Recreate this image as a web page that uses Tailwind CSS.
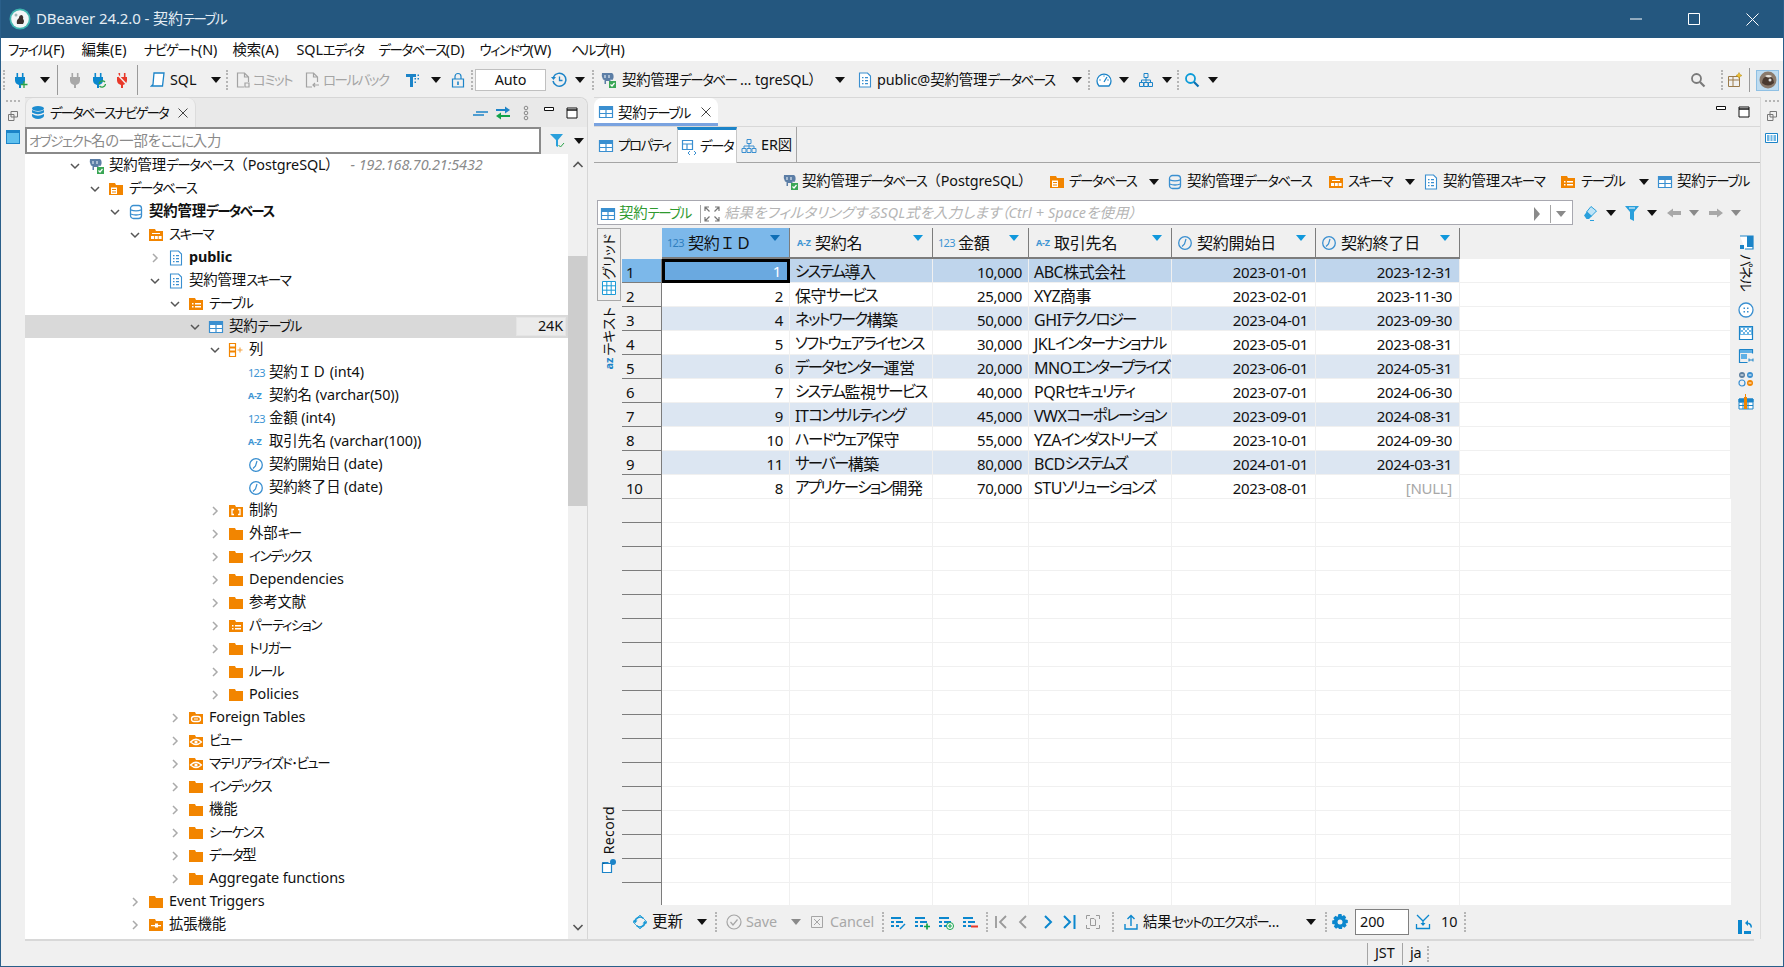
<!DOCTYPE html>
<html lang="ja">
<head>
<meta charset="utf-8">
<title>DBeaver 24.2.0 - 契約テーブル</title>
<script src="https://cdn.jsdelivr.net/npm/@tailwindcss/browser@4"></script>
</head>
<body class="m-0">
<svg class="hidden">
<symbol id="ar" viewBox="0 0 10 6"><path d="M0 0h10L5 6z" fill="currentColor"/></symbol>
<symbol id="cd" viewBox="0 0 12 12"><path d="M2 4l4 4 4-4" fill="none" stroke="#555" stroke-width="1.5"/></symbol>
<symbol id="cr" viewBox="0 0 12 12"><path d="M4 2l4 4-4 4" fill="none" stroke="#aaa" stroke-width="1.5"/></symbol>
<symbol id="fo" viewBox="0 0 16 16"><path d="M1 2h6l1 2h7v10H1z" fill="#f28500"/></symbol>
<symbol id="fl" viewBox="0 0 16 16"><path d="M1 2h6l1 2h7v10H1z" fill="#f28500"/><path d="M4 7h1.5v1.5H4zM7 7h6v1.5H7zM4 10h1.5v1.5H4zM7 10h6v1.5H7z" fill="#fff"/></symbol>
<symbol id="fs" viewBox="0 0 16 16"><path d="M1 2h6l1 2h7v10H1z" fill="#f28500"/><path d="M3 9h3v3H3zM6.800 9h3v3h-3zM10.600 9h3v3h-3z M4 6h8v1H4z" fill="#fff"/></symbol>
<symbol id="fd" viewBox="0 0 16 16"><path d="M1 2h6l1 2h7v10H1z" fill="#f28500"/><path d="M3 6.500h6v6.500H3z" fill="#fff"/><path d="M4 8h4v1H4zM4 10.500h4v1H4z" fill="#f28500"/></symbol>
<symbol id="fc" viewBox="0 0 16 16"><path d="M1 2h6l1 2h7v10H1z" fill="#f28500"/><path d="M6 6.500H4v5h2M10 6.500h2v5h-2" fill="none" stroke="#fff" stroke-width="1.300"/></symbol>
<symbol id="fv" viewBox="0 0 16 16"><path d="M1 2h6l1 2h7v10H1z" fill="#f28500"/><path d="M2.500 9q5.500-5.500 11 0q-5.500 5-11 0z" fill="none" stroke="#fff" stroke-width="1.200"/><circle cx="8" cy="9" r="1.600" fill="#fff"/></symbol>
<symbol id="ff" viewBox="0 0 16 16"><path d="M1 2h6l1 2h7v10H1z" fill="#f28500"/><rect x="3.500" y="6.500" width="9" height="5" rx="2.500" fill="none" stroke="#fff" stroke-width="1.300"/><path d="M6 9h4" stroke="#fff"/></symbol>
<symbol id="fe" viewBox="0 0 16 16"><path d="M1 2h6l1 2h7v10H1z" fill="#f28500"/><path d="M3 8h4V6.500h3V8h3v1.300h-3v1.300H7V9.300H3z" fill="#fff"/></symbol>
<symbol id="db" viewBox="0 0 16 16"><g fill="none" stroke="#3a8fd0" stroke-width="1.300"><rect x="2.500" y="1.500" width="11" height="13" rx="3"/><path d="M2.500 5.800q5.500 2 11 0M2.500 10q5.500 2 11 0"/></g></symbol>
<symbol id="dbf" viewBox="0 0 16 16"><g fill="#1c8cd0"><ellipse cx="8" cy="3.500" rx="6" ry="2.500"/><path d="M2 5q6 3.500 12 0v2.500q-6 3.500-12 0zM2 9q6 3.500 12 0v2q-1 2.500-6 3-5-.5-6-3z"/></g></symbol>
<symbol id="doc" viewBox="0 0 16 16"><path d="M2.500 1h8l3 3v11h-11z" fill="#fff" stroke="#3a8fd0" stroke-width="1.100"/><path d="M5 5h1.500v1.300H5zM8 5h3v1.300H8zM5 8h1.500v1.300H5zM8 8h3v1.300H8zM5 11h1.500v1.300H5zM8 11h3v1.300H8z" fill="#3a8fd0"/></symbol>
<symbol id="tb" viewBox="0 0 16 16"><path d="M1.500 2.500h13v11h-13z" fill="#fff" stroke="#3a8fd0" stroke-width="1.200"/><path d="M1.500 3h13v3h-13z" fill="#3a8fd0"/><path d="M1.500 9.500h13M8 6v7.500" stroke="#3a8fd0" stroke-width="1.200"/></symbol>
<symbol id="col" viewBox="0 0 16 16"><path d="M1.500 1.500h6v13h-6z" fill="#fff" stroke="#f28500" stroke-width="1.200"/><path d="M1.500 5.500h6M1.500 9.500h6" stroke="#f28500" stroke-width="1.800"/><path d="M9.500 8h5M12 5.500v5" stroke="#f28500" stroke-width="1.100" opacity=".75"/></symbol>
<symbol id="clk" viewBox="0 0 16 16"><circle cx="8" cy="8" r="6.300" fill="none" stroke="#3a8fd0" stroke-width="1.300"/><path d="M9 4L7.500 9 5 11.500" fill="none" stroke="#3a8fd0" stroke-width="1.200"/></symbol>
<symbol id="pg" viewBox="0 0 16 16"><path d="M2 1h10q2 1 1.500 5l-1 2-2-.5V12H9V9H6v3H4.500V8L3 7.500Q1 4 2 1z" fill="#5c7ea6"/><path d="M5 3v3M9 3v3" stroke="#dbe6f0" stroke-width="1.200"/><path d="M9 9h7v7H9z" fill="#3aa655"/><path d="M10.500 12.500l1.500 1.500 2.500-3" fill="none" stroke="#fff" stroke-width="1.200"/></symbol>
<symbol id="plug" viewBox="0 0 16 16"><path d="M4.500 1h1.600v4h3.800V1h1.600v4H13v3.500a5 5 0 0 1-4 4.400V16H7v-3.100a5 5 0 0 1-4-4.400V5h1.500z" fill="currentColor"/></symbol>
<symbol id="rowp" viewBox="0 0 16 16"><path d="M1 3h10v2H1zM1 7h3v2H1zM6 7h7v2H6zM1 11h3v2H1zM6 11h3v2H6z" fill="#0b87ce"/></symbol>
</svg>

<div class="flex flex-col w-[1784px] h-[967px] overflow-hidden bg-[#f0f0f0] border-x border-b border-[#2a5f8a] text-[14.4px] leading-none text-[#111] [font-family:'Noto_Sans','Noto_Sans_CJK_JP',sans-serif] [font-feature-settings:'palt'] tracking-[-0.1px] [&_em]:not-italic [&_em]:text-[13.5px] [&_em]:tracking-[-1.5px]">

  <!-- title bar -->
  <div class="flex items-center h-[38px] shrink-0 bg-[#24577f] text-[#e4edf4] text-[15px]">
    <svg class="w-[22px] h-[22px] ml-[8px]" viewBox="0 0 22 22"><circle cx="11" cy="11" r="10.500" fill="#3fb6b0"/><circle cx="11" cy="11" r="8.800" fill="#f2f6f6"/><path d="M8 16q-1-4 2-6 0-3 3-3 2 2 1 4 2 2 0 5z" fill="#3a2f2b"/><circle cx="7" cy="7" r="1.500" fill="#9fb8b8"/></svg>
    <span class="ml-[5px]">DBeaver 24.2.0 - 契約<em>テーブル</em></span>
    <svg class="w-[12px] h-[12px] ml-auto" viewBox="0 0 12 12"><path d="M0 6h12" stroke="#fff"/></svg>
    <svg class="w-[12px] h-[12px] ml-[46px]" viewBox="0 0 12 12"><path d="M.5.500h11v11H.500z" fill="none" stroke="#fff"/></svg>
    <svg class="w-[13px] h-[13px] ml-[46px] mr-[24px]" viewBox="0 0 13 13"><path d="M.500.500l12 12M12.500.500l-12 12" stroke="#fff"/></svg>
  </div>

  <!-- menu -->
  <div class="flex items-center h-[23px] shrink-0 bg-white pl-[7px] pt-[2px] whitespace-nowrap">
    <span class="w-[73.5px]"><em>ファイル</em>(F)</span><span class="w-[62px]">編集(E)</span><span class="w-[89px]"><em>ナビゲート</em>(N)</span><span class="w-[64px]">検索(A)</span><span class="w-[82px]">SQL<em>エディタ</em></span><span class="w-[101px]"><em>データベース</em>(D)</span><span class="w-[92px]"><em>ウィンドウ</em>(W)</span><span><em>ヘルプ</em>(H)</span>
  </div>

  <!-- main toolbar -->
  <div class="flex items-center h-[36px] shrink-0 pt-[2px] whitespace-nowrap">
    <span class="w-[2px] h-[20px] ml-[2px] border-l-2 border-dotted border-[#b5b5b5]"></span>
    <svg class="w-4 h-4 ml-[7px] text-[#0b87ce]"><use href="#plug"/><path d="M8.500 12.500h7M12 9v7" stroke="#2aa34a" stroke-width="1.300"/></svg>
    <svg class="w-[10px] h-[6px] ml-[12px]"><use href="#ar"/></svg>
    <span class="w-px h-[30px] ml-[7px] bg-[#9a9a9a]"></span>
    <svg class="w-4 h-4 ml-[9px] text-[#a8a8a8]"><use href="#plug"/></svg>
    <svg class="w-4 h-4 ml-[7px] text-[#0b87ce]"><use href="#plug"/><path d="M9 12a3.500 3.500 0 0 1 6-2M15.500 12a3.500 3.500 0 0 1-6 2" fill="none" stroke="#2aa34a" stroke-width="1.300"/></svg>
    <svg class="w-4 h-4 ml-[8px] text-[#e8392a]"><use href="#plug"/><path d="M2 1l13 14" stroke="#f0f0f0" stroke-width="1.500"/></svg>
    <span class="w-px h-[30px] ml-[7px] bg-[#9a9a9a]"></span>
    <svg class="w-4 h-4 ml-[12px]" viewBox="0 0 16 16"><path d="M4 1h10l-1.500 13H1.500L3 12.500z" fill="#fff" stroke="#1c84c8" stroke-width="1.300"/></svg>
    <span class="w-[36px] ml-[4px]">SQL</span>
    <svg class="w-[10px] h-[6px] ml-[5px]"><use href="#ar"/></svg>
    <span class="w-[2px] h-[20px] ml-[5px] border-l-2 border-dotted border-[#b5b5b5]"></span>
    <svg class="w-4 h-4 ml-[7px]" viewBox="0 0 16 16"><path d="M9 15H2.500V1h7l4 4v5M9.500 1v4h4" fill="none" stroke="#a3a3a3" stroke-width="1.200"/><path d="M10 11h4v4h-4z" fill="none" stroke="#a3a3a3" stroke-width="1.200"/></svg>
    <span class="w-[50px] ml-[2px] text-[#a5a5a5]"><em>コミット</em></span>
    <svg class="w-4 h-4 ml-px" viewBox="0 0 16 16"><path d="M8 15H2.500V1h7l4 4v5M9.500 1v4h4" fill="none" stroke="#a3a3a3" stroke-width="1.200"/><path d="M9 13h6M11 11l-2 2 2 2" fill="none" stroke="#a3a3a3" stroke-width="1.200"/></svg>
    <span class="w-[82px] ml-[3px] text-[#a5a5a5]"><em>ロールバック</em></span>
    <svg class="w-4 h-4" viewBox="0 0 16 16"><path d="M1 2h10v3H8v10H5V5H1z" fill="#1c84c8"/><path d="M12.500 2.500h1.500v1.500h-1.500zM12.500 6h1.500v1.500h-1.500zM9.500 6H11v1.500H9.500zM9.500 9.500H11V11H9.500z" fill="#1c84c8"/></svg>
    <svg class="w-[10px] h-[6px] ml-[10px]"><use href="#ar"/></svg>
    <svg class="w-4 h-4 ml-[9px]" viewBox="0 0 16 16"><path d="M2.500 7h11v8h-11z" fill="none" stroke="#1c84c8" stroke-width="1.200"/><path d="M5 7V4.500a3 3 0 0 1 6 0V7" fill="none" stroke="#1c84c8" stroke-width="1.200"/><path d="M7.200 9.500h1.600V13H7.200z" fill="#1c84c8"/></svg>
    <span class="w-[2px] h-[20px] ml-[5px] border-l-2 border-dotted border-[#b5b5b5]"></span>
    <span class="flex items-center justify-center w-[71px] h-[22px] ml-[2px] bg-white border border-[#c0c0c0]">Auto</span>
    <svg class="w-4 h-4 ml-[5px]" viewBox="0 0 16 16"><path d="M2.500 5a6.500 6.500 0 1 1-.5 4" fill="none" stroke="#1c84c8" stroke-width="1.500"/><path d="M0 5h5L2.500 8z" fill="#1c84c8"/><path d="M8.500 4.500V8.500h3" fill="none" stroke="#1c84c8" stroke-width="1.300"/></svg>
    <svg class="w-[10px] h-[6px] ml-[8px]"><use href="#ar"/></svg>
    <span class="w-[2px] h-[20px] ml-[7px] border-l-2 border-dotted border-[#b5b5b5]"></span>
    <svg class="w-4 h-4 ml-[6px]"><use href="#pg"/></svg>
    <span class="w-[210px] ml-[6px]">契約管理<em>データベー</em> ... tgreSQL）</span>
    <svg class="w-[10px] h-[6px] ml-[3px]"><use href="#ar"/></svg>
    <svg class="w-4 h-4 ml-[12px]"><use href="#doc"/></svg>
    <span class="w-[192px] ml-[4px]">public@契約管理<em>データベース</em></span>
    <svg class="w-[10px] h-[6px] ml-[3px]"><use href="#ar"/></svg>
    <span class="w-[2px] h-[20px] ml-[6px] border-l-2 border-dotted border-[#b5b5b5]"></span>
    <svg class="w-4 h-4 ml-[6px]" viewBox="0 0 16 16"><path d="M3 14a7 7 0 1 1 10 0z" fill="#fff" stroke="#1c84c8" stroke-width="1.300"/><path d="M8 10l3-5M3.500 8h1M11.500 8h1M8 3.500v1" stroke="#1c84c8" stroke-width="1.300"/></svg>
    <svg class="w-[10px] h-[6px] ml-[7px]"><use href="#ar"/></svg>
    <svg class="w-4 h-4 ml-[9px]" viewBox="0 0 16 16"><path d="M6 1.500h4v4H6zM1.500 10.500h4v4h-4zM6 10.500h4v4H6zM10.500 10.500h4v4h-4zM8 5.500v5M3.500 10.500V8h9v2.500" fill="none" stroke="#1c84c8"/></svg>
    <svg class="w-[10px] h-[6px] ml-[8px]"><use href="#ar"/></svg>
    <span class="w-[2px] h-[20px] ml-[5px] border-l-2 border-dotted border-[#b5b5b5]"></span>
    <svg class="w-4 h-4 ml-[5px]" viewBox="0 0 16 16"><circle cx="6.500" cy="6.500" r="4.500" fill="none" stroke="#0b9bd8" stroke-width="1.800"/><path d="M10 10l4.500 4.500" stroke="#0b6fb0" stroke-width="2.200"/></svg>
    <svg class="w-[10px] h-[6px] ml-[8px]"><use href="#ar"/></svg>
    <svg class="w-4 h-4 ml-auto" viewBox="0 0 16 16"><circle cx="6.500" cy="6.500" r="4.500" fill="none" stroke="#7a7a7a" stroke-width="1.800"/><path d="M10 10l4.500 4.500" stroke="#7a7a7a" stroke-width="2.200"/></svg>
    <span class="w-[2px] h-[20px] ml-[15px] border-l-2 border-dotted border-[#b5b5b5]"></span>
    <svg class="w-4 h-4 ml-[4px]" viewBox="0 0 16 16"><path d="M1.500 4.500h11v10h-11zM1.500 8h11M6 4.500v10" fill="none" stroke="#9a7a4a"/><path d="M12 .500l1 2 2 1-2 1-1 2-1-2-2-1 2-1z" fill="#f2c230" stroke="#b08a20" stroke-width=".5"/></svg>
    <span class="w-px h-[24px] ml-[6px] bg-[#9a9a9a]"></span>
    <span class="flex items-center justify-center w-[23px] h-[21px] ml-[6px] mr-[4px] bg-[#bfdcf0] border border-[#8fc0e4]">
      <svg class="w-[18px] h-[18px]" viewBox="0 0 18 18"><circle cx="9" cy="9" r="8.500" fill="#8a7a6c"/><path d="M3 12q0-6 6-7 6 1 6 7-6 5-12 0z" fill="#4a3a30"/><path d="M6 5q3-2 7 0-3 3-7 0z" fill="#e8e4dc"/><circle cx="11" cy="9" r="1.500" fill="#ddd"/></svg>
    </span>
  </div>

  <!-- main area -->
  <div class="flex h-[842px] shrink-0">
    <!-- left trim -->
    <div class="flex flex-col items-center w-[24px] shrink-0">
      <span class="w-[14px] h-0 mt-[3px] border-t-2 border-dotted border-[#b5b5b5]"></span>
      <svg class="w-[10px] h-[10px] mt-[9px]" viewBox="0 0 10 10"><path d="M3 .500h6.500v5.500H3zM.500 3.500H6v6H.500z" fill="#f0f0f0" stroke="#777"/></svg>
      <span class="w-[14px] h-[14px] mt-[9px] bg-[#5fc0ee] border border-[#1c84c8] border-t-[3px]"></span>
    </div>

    <!-- navigator -->
    <div class="flex flex-col w-[563px] shrink-0 border-t border-r border-[#d6d6d6] rounded-tr-lg">
      <div class="flex items-center h-[29px] shrink-0 bg-[#e9e9e9] rounded-tr-lg">
        <div class="flex items-center w-[171px] h-full bg-[#f0f0f0] border-x border-[#dcdcdc] rounded-t-lg whitespace-nowrap">
          <svg class="w-4 h-4 ml-[4px]"><use href="#dbf"/></svg>
          <span class="ml-[4px] w-[124px] pt-[2px] [&_em]:!tracking-[-2px]"><em>データベースナビゲータ</em></span>
          <svg class="w-[10px] h-[10px] ml-[4px]" viewBox="0 0 10 10"><path d="M.500.500l9 9M9.500.500l-9 9" stroke="#444"/></svg>
        </div>
        <svg class="w-4 h-4 ml-[276px]" viewBox="0 0 16 16"><path d="M4 7h12M1 10h11" stroke="#1c84c8" stroke-width="1.500"/></svg>
        <svg class="w-4 h-4 ml-[7px]" viewBox="0 0 16 16"><path d="M1 5h11" stroke="#1c84c8" stroke-width="2"/><path d="M10 1.500L15 5l-5 3.500z" fill="#1c84c8"/><path d="M15 11H4" stroke="#12a34a" stroke-width="2"/><path d="M6 7.500L1 11l5 3.500z" fill="#12a34a"/></svg>
        <svg class="w-4 h-4 ml-[7px]" viewBox="0 0 16 16"><g fill="none" stroke="#888"><circle cx="8" cy="3" r="1.800"/><circle cx="8" cy="8" r="1.800"/><circle cx="8" cy="13" r="1.800"/></g></svg>
        <svg class="w-[12px] h-[12px] ml-[9px] mb-[8px]" viewBox="0 0 12 12"><path d="M1.500 4.500h9v3h-9z" fill="#fff" stroke="#111"/></svg>
        <svg class="w-[12px] h-[12px] ml-[11px]" viewBox="0 0 12 12"><path d="M1 1h10v10H1z" fill="#fff" stroke="#111"/><path d="M1 3h10" stroke="#111" stroke-width="1.500"/></svg>
      </div>
      <div class="flex items-center h-[27px] shrink-0">
        <div class="flex items-center w-[516px] h-full bg-white border-2 border-[#8a8a8a] pl-[2px] text-[#8a8a8a] whitespace-nowrap pt-[2px]"><em>オブジェクト</em>名の一部を<em>ここに</em>入力</div>
        <svg class="w-4 h-4 ml-[8px]" viewBox="0 0 16 16"><path d="M1 1h13L9 7v7L7 13V7z" fill="#2aa0dc"/><path d="M9.500 12l2 2 3.500-4" fill="none" stroke="#2aa34a"/></svg>
        <svg class="w-[10px] h-[6px] ml-[9px]"><use href="#ar"/></svg>
      </div>
      <div class="flex h-[785px]">
        <!-- tree -->
        <div class="flex-1 bg-white overflow-hidden whitespace-nowrap [&>div]:flex [&>div]:items-center [&>div]:h-[23px] [&_svg:first-child]:w-[12px] [&_svg:first-child]:h-[12px] [&_svg:nth-child(2)]:w-4 [&_svg:nth-child(2)]:h-4 [&_svg:nth-child(2)]:ml-[7px] [&_b]:ml-[5px] [&_b]:font-normal">
          <div class="pl-[44px]"><svg><use href="#cd"/></svg><svg><use href="#pg"/></svg><b>契約管理<em>データベース</em><span class="[font-feature-settings:normal]">（</span>PostgreSQL）</b><i class="ml-[18px] text-[#8a8a8a]">- 192.168.70.21:5432</i></div>
          <div class="pl-[64px]"><svg><use href="#cd"/></svg><svg><use href="#fd"/></svg><b><em>データベース</em></b></div>
          <div class="pl-[84px]"><svg><use href="#cd"/></svg><svg><use href="#db"/></svg><b class="!font-bold">契約管理<em>データベース</em></b></div>
          <div class="pl-[104px]"><svg><use href="#cd"/></svg><svg><use href="#fs"/></svg><b><em>スキーマ</em></b></div>
          <div class="pl-[124px]"><svg><use href="#cr"/></svg><svg><use href="#doc"/></svg><b class="!font-bold">public</b></div>
          <div class="pl-[124px]"><svg><use href="#cd"/></svg><svg><use href="#doc"/></svg><b>契約管理<em>スキーマ</em></b></div>
          <div class="pl-[144px]"><svg><use href="#cd"/></svg><svg><use href="#fl"/></svg><b><em>テーブル</em></b></div>
          <div class="pl-[164px] bg-[#d9d9d9]"><svg><use href="#cd"/></svg><svg><use href="#tb"/></svg><b>契約<em>テーブル</em></b><span class="flex items-center justify-end w-[50px] h-[19px] ml-auto mr-[2px] pr-[2px] bg-[#ebebeb] border border-[#e4e4e4]">24K</span></div>
          <div class="pl-[184px]"><svg><use href="#cd"/></svg><svg><use href="#col"/></svg><b>列</b></div>
          <div class="pl-[223px]"><span class="w-[12px] text-[11px] text-[#3d95d3] tracking-[-0.7px]">123</span><b class="!ml-[9px]">契約<span class="[font-feature-settings:normal]">ＩＤ</span> (int4)</b></div>
          <div class="pl-[223px]"><span class="w-[12px] text-[9px] font-bold text-[#3d95d3] tracking-[-0.3px]">A-Z</span><b class="!ml-[9px]">契約名 (varchar(50))</b></div>
          <div class="pl-[223px]"><span class="w-[12px] text-[11px] text-[#3d95d3] tracking-[-0.7px]">123</span><b class="!ml-[9px]">金額 (int4)</b></div>
          <div class="pl-[223px]"><span class="w-[12px] text-[9px] font-bold text-[#3d95d3] tracking-[-0.3px]">A-Z</span><b class="!ml-[9px]">取引先名 (varchar(100))</b></div>
          <div class="pl-[223px]"><span class="w-4 h-4"><svg class="!w-4 !h-4"><use href="#clk"/></svg></span><b>契約開始日 (date)</b></div>
          <div class="pl-[223px]"><span class="w-4 h-4"><svg class="!w-4 !h-4"><use href="#clk"/></svg></span><b>契約終了日 (date)</b></div>
          <div class="pl-[184px]"><svg><use href="#cr"/></svg><svg><use href="#fc"/></svg><b>制約</b></div>
          <div class="pl-[184px]"><svg><use href="#cr"/></svg><svg><use href="#fo"/></svg><b>外部<em>キー</em></b></div>
          <div class="pl-[184px]"><svg><use href="#cr"/></svg><svg><use href="#fo"/></svg><b><em>インデックス</em></b></div>
          <div class="pl-[184px]"><svg><use href="#cr"/></svg><svg><use href="#fo"/></svg><b>Dependencies</b></div>
          <div class="pl-[184px]"><svg><use href="#cr"/></svg><svg><use href="#fo"/></svg><b>参考文献</b></div>
          <div class="pl-[184px]"><svg><use href="#cr"/></svg><svg><use href="#fl"/></svg><b><em>パーティション</em></b></div>
          <div class="pl-[184px]"><svg><use href="#cr"/></svg><svg><use href="#fo"/></svg><b><em>トリガー</em></b></div>
          <div class="pl-[184px]"><svg><use href="#cr"/></svg><svg><use href="#fo"/></svg><b><em>ルール</em></b></div>
          <div class="pl-[184px]"><svg><use href="#cr"/></svg><svg><use href="#fo"/></svg><b>Policies</b></div>
          <div class="pl-[144px]"><svg><use href="#cr"/></svg><svg><use href="#ff"/></svg><b>Foreign Tables</b></div>
          <div class="pl-[144px]"><svg><use href="#cr"/></svg><svg><use href="#fv"/></svg><b><em>ビュー</em></b></div>
          <div class="pl-[144px]"><svg><use href="#cr"/></svg><svg><use href="#fv"/></svg><b><em>マテリアライズド･ビュー</em></b></div>
          <div class="pl-[144px]"><svg><use href="#cr"/></svg><svg><use href="#fo"/></svg><b><em>インデックス</em></b></div>
          <div class="pl-[144px]"><svg><use href="#cr"/></svg><svg><use href="#fo"/></svg><b>機能</b></div>
          <div class="pl-[144px]"><svg><use href="#cr"/></svg><svg><use href="#fo"/></svg><b><em>シーケンス</em></b></div>
          <div class="pl-[144px]"><svg><use href="#cr"/></svg><svg><use href="#fo"/></svg><b><em>データ</em>型</b></div>
          <div class="pl-[144px]"><svg><use href="#cr"/></svg><svg><use href="#fo"/></svg><b>Aggregate functions</b></div>
          <div class="pl-[104px]"><svg><use href="#cr"/></svg><svg><use href="#fo"/></svg><b>Event Triggers</b></div>
          <div class="pl-[104px]"><svg><use href="#cr"/></svg><svg><use href="#fe"/></svg><b>拡張機能</b></div>
        </div>
        <!-- scrollbar -->
        <div class="flex flex-col items-center w-[19px] shrink-0">
          <svg class="w-[12px] h-[20px]" viewBox="0 0 12 20"><path d="M1.500 13L6 8.500l4.500 4.500" fill="none" stroke="#555" stroke-width="1.600"/></svg>
          <div class="w-full h-[250px] mt-[82px] bg-[#cdcdcd]"></div>
          <svg class="w-[12px] h-[20px] mt-auto mb-[1px]" viewBox="0 0 12 20"><path d="M1.500 7L6 11.500 10.500 7" fill="none" stroke="#555" stroke-width="1.600"/></svg>
        </div>
      </div>
    </div>

    <div class="w-[6px] shrink-0"></div>

    <!-- editor -->
    <div class="flex flex-col w-[1166px] shrink-0 whitespace-nowrap">
      <div class="flex items-center h-[30px] shrink-0 border-t border-b border-[#d8d8d8] bg-[#f0f0f0]">
        <div class="flex items-center w-[124px] h-full bg-white border-b-[3px] border-[#7aa3e0] rounded-t-lg pt-[3px]">
          <svg class="w-4 h-4 ml-[4px]"><use href="#tb"/></svg>
          <span class="ml-[4px] w-[80px] pt-[2px]">契約<em>テーブル</em></span>
          <svg class="w-[10px] h-[10px] ml-[3px]" viewBox="0 0 10 10"><path d="M.500.500l9 9M9.500.500l-9 9" stroke="#444"/></svg>
        </div>
        <svg class="w-[12px] h-[12px] ml-auto mb-[8px]" viewBox="0 0 12 12"><path d="M1.500 4.500h9v3h-9z" fill="#fff" stroke="#111"/></svg>
        <svg class="w-[12px] h-[12px] ml-[11px] mr-[10px]" viewBox="0 0 12 12"><path d="M1 1h10v10H1z" fill="#fff" stroke="#111"/><path d="M1 3h10" stroke="#111" stroke-width="1.500"/></svg>
      </div>
      <div class="flex items-stretch h-[36px] shrink-0 border-b border-[#a5a5a5]">
        <div class="flex items-center w-[83px] pt-[2px]"><svg class="w-4 h-4 ml-[4px]"><use href="#tb"/></svg><span class="ml-[4px]"><em>プロパティ</em></span></div>
        <div class="flex items-center w-[60px] -mb-px bg-white border-t-[3px] border-[#1c84c8] border-x border-x-[#c8c8c8]">
          <svg class="w-4 h-4 ml-[3px]" viewBox="0 0 16 16"><path d="M1.500 1.500h10v9h-10zM1.500 5h10M6 5v5.500" fill="none" stroke="#3a8fd0" stroke-width="1.200"/><path d="M9 12l-2 2 2 2M13 12l2 2-2 2" fill="none" stroke="#3a8fd0"/></svg>
          <span class="ml-[3px]"><em>データ</em></span>
        </div>
        <div class="flex items-center w-[60px] border-r border-[#a5a5a5] pt-[2px]"><svg class="w-4 h-4 ml-[4px]" viewBox="0 0 16 16"><path d="M6 1.500h4v4H6zM1 10.500h4v4H1zM6 10.500h4v4H6zM11 10.500h4v4h-4zM8 5.500v5M3 10.500V8h10v2.500" fill="none" stroke="#3a8fd0"/></svg><span class="ml-[4px]">ER図</span></div>
      </div>
      <!-- breadcrumb -->
      <div class="flex items-center h-[37px] shrink-0">
        <svg class="w-4 h-4 ml-[188px]"><use href="#pg"/></svg>
        <span class="w-[247px] ml-[4px]">契約管理<em>データベース</em><span class="[font-feature-settings:normal]">（</span>PostgreSQL）</span>
        <svg class="w-4 h-4"><use href="#fd"/></svg>
        <span class="w-[80px] ml-[4px]"><em>データベース</em></span>
        <svg class="w-[10px] h-[6px]"><use href="#ar"/></svg>
        <svg class="w-4 h-4 ml-[8px]"><use href="#db"/></svg>
        <span class="w-[141px] ml-[4px]">契約管理<em>データベース</em></span>
        <svg class="w-4 h-4"><use href="#fs"/></svg>
        <span class="w-[57px] ml-[4px]"><em>スキーマ</em></span>
        <svg class="w-[10px] h-[6px]"><use href="#ar"/></svg>
        <svg class="w-4 h-4 ml-[8px]"><use href="#doc"/></svg>
        <span class="w-[117px] ml-[4px]">契約管理<em>スキーマ</em></span>
        <svg class="w-4 h-4"><use href="#fl"/></svg>
        <span class="w-[57px] ml-[5px]"><em>テーブル</em></span>
        <svg class="w-[10px] h-[6px] ml-px"><use href="#ar"/></svg>
        <svg class="w-4 h-4 ml-[8px]"><use href="#tb"/></svg>
        <span class="ml-[4px]">契約<em>テーブル</em></span>
      </div>
      <!-- filter -->
      <div class="flex items-center h-[25px] shrink-0">
        <div class="flex items-center w-[976px] h-full ml-[3px] bg-white border border-[#a8a8b0] pt-[2px]">
          <svg class="w-4 h-4 ml-[2px]"><use href="#tb"/></svg>
          <span class="w-[80px] ml-[3px] text-[#2f9a2f]">契約<em>テーブル</em></span>
          <span class="w-px h-[18px] ml-px bg-[#a5a5a5]"></span>
          <svg class="w-4 h-4 ml-[3px]" viewBox="0 0 16 16"><path d="M1 5V1h4M11 1h4v4M15 11v4h-4M5 15H1v-4M1.500 1.500l4 4M14.500 1.500l-4 4M14.500 14.500l-4-4M1.500 14.500l4-4" fill="none" stroke="#777" stroke-width="1.200"/></svg>
          <i class="flex-1 ml-[4px] text-[#b5b5b5] tracking-[0.15px]">結果をフィルタリングするSQL式を入力します（Ctrl + Spaceを使用）</i>
          <svg class="w-[8px] h-[14px]" viewBox="0 0 8 14"><path d="M1 0l6 7-6 7z" fill="#8a8a8a"/></svg>
          <span class="w-px h-[18px] ml-[9px] bg-[#a5a5a5]"></span>
          <svg class="w-[10px] h-[6px] ml-[5px] mr-[6px] text-[#8a8a8a]"><use href="#ar"/></svg>
        </div>
        <svg class="w-4 h-4 ml-[9px]" viewBox="0 0 16 16"><path d="M9 1.500l5.500 4.500L9 11.500 4.500 7z" fill="#bfe3f6" stroke="#2aa0dc"/><path d="M5 6.500l5 4.500-3 3H4.500L2 10.500z" fill="#2aa0dc"/><path d="M8 15.500h4" stroke="#2aa0dc"/></svg>
        <svg class="w-[10px] h-[6px] ml-[8px]"><use href="#ar"/></svg>
        <svg class="w-4 h-4 ml-[8px]" viewBox="0 0 16 16"><path d="M1 1h14L10 7v9l-4-2V7z" fill="#2aa0dc"/><path d="M5 3h6" stroke="#fff"/></svg>
        <svg class="w-[10px] h-[6px] ml-[7px]"><use href="#ar"/></svg>
        <svg class="w-4 h-4 ml-[9px]" viewBox="0 0 16 16"><path d="M1 8l6-4.500V6h8v4H7v2.500z" fill="#a8a8a8"/></svg>
        <svg class="w-[10px] h-[6px] ml-[7px] text-[#8a8a8a]"><use href="#ar"/></svg>
        <svg class="w-4 h-4 ml-[9px]" viewBox="0 0 16 16"><path d="M15 8L9 3.500V6H1v4h8v2.500z" fill="#a8a8a8"/></svg>
        <svg class="w-[10px] h-[6px] ml-[7px] text-[#8a8a8a]"><use href="#ar"/></svg>
      </div>

      <!-- grid area -->
      <div class="flex h-[677px] shrink-0 mt-[3px]">
        <!-- side tabs -->
        <div class="flex flex-col w-[28px] shrink-0 pl-[3px] text-[14px]">
          <div class="flex flex-col items-center justify-between w-[24px] h-[73px] pt-[5px] pb-[4px] border border-[#a8a8a8]">
            <span class="[writing-mode:vertical-rl] [text-orientation:sideways] rotate-180">グリッド</span>
            <svg class="w-4 h-4" viewBox="0 0 16 16"><path d="M1.500 1.500h13v13h-13zM1.500 5.800h13M1.500 10.200h13M5.800 1.500v13M10.200 1.500v13" fill="#fff" stroke="#1c9ad6"/></svg>
          </div>
          <div class="flex flex-col items-center w-[24px] mt-[6px]">
            <span class="[writing-mode:vertical-rl] [text-orientation:sideways] rotate-180">テキスト</span>
            <span class="mt-[3px] text-[11px] text-[#1c84c8] rotate-270 font-bold">az</span>
          </div>
          <div class="flex flex-col items-center w-[24px] mt-auto mb-[31px]">
            <span class="[writing-mode:vertical-rl] [text-orientation:sideways] rotate-180 tracking-[0.4px]">Record</span>
            <svg class="w-4 h-4 mt-[4px]" viewBox="0 0 16 16"><path d="M1.500 5.500h9v9h-9z" fill="#fff" stroke="#1c84c8" stroke-width="1.200"/><path d="M1.500 5.500v-1h6" stroke="#1c84c8"/><circle cx="12" cy="4" r="3" fill="#1c84c8"/></svg>
          </div>
        </div>
        <!-- grid -->
        <div class="flex flex-col w-[1109px] shrink-0 overflow-hidden">
          <div class="grid grid-cols-[40px_128px_143px_96px_143px_144px_144px_1fr] h-[31px] shrink-0 text-[16px] tracking-[-0.2px] [&>div]:flex [&>div]:items-center [&>div]:border-b-2 [&>div]:border-r [&>div]:border-[#7c7c7c] [&_svg:last-child]:ml-auto [&_svg:last-child]:mr-[9px] [&_svg:last-child]:mb-[10px] [&_svg:last-child]:text-[#1098dc]">
            <div class="justify-center !border-r-0 !border-b-0"><svg class="w-[12px] h-[12px] !mr-[-12px] !mb-0" viewBox="0 0 12 12"><circle cx="6" cy="6" r="5" fill="none" stroke="#4aaa6a" stroke-width="1.300"/><circle cx="6" cy="6" r="2.300" fill="#4aaa6a"/></svg></div>
            <div class="bg-[#7cb8ea]"><span class="w-[20px] pl-[5px] text-[11px] text-[#2f7fc0] tracking-[-0.7px]">123</span><span class="ml-[6px]">契約<span class="[font-feature-settings:normal]">ＩＤ</span></span><svg class="w-[10px] h-[6px] !text-[#0f6eb5]"><use href="#ar"/></svg></div>
            <div><span class="w-[20px] pl-[7px] text-[9px] font-bold text-[#3d95d3]">A-Z</span><span class="ml-[5px]">契約名</span><svg class="w-[10px] h-[6px]"><use href="#ar"/></svg></div>
            <div><span class="w-[20px] pl-[5px] text-[11px] text-[#3d95d3] tracking-[-0.7px]">123</span><span class="ml-[5px]">金額</span><svg class="w-[10px] h-[6px]"><use href="#ar"/></svg></div>
            <div><span class="w-[20px] pl-[7px] text-[9px] font-bold text-[#3d95d3]">A-Z</span><span class="ml-[5px]">取引先名</span><svg class="w-[10px] h-[6px]"><use href="#ar"/></svg></div>
            <div><svg class="w-4 h-4 ml-[5px]"><use href="#clk"/></svg><span class="ml-[4px]">契約開始日</span><svg class="w-[10px] h-[6px]"><use href="#ar"/></svg></div>
            <div><svg class="w-4 h-4 ml-[5px]"><use href="#clk"/></svg><span class="ml-[4px]">契約終了日</span><svg class="w-[10px] h-[6px]"><use href="#ar"/></svg></div>
            <div class="!border-0"></div>
          </div>
          <div class="bg-white shrink-0 text-[15px] tracking-[-0.3px] [&_em]:!text-[15.5px] [&_em]:!tracking-[-1.75px] [&>div]:grid [&>div]:grid-cols-[40px_128px_143px_96px_143px_144px_144px_1fr] [&>div]:h-[24px] [&>div>span]:flex [&>div>span]:items-center [&>div>span]:pt-[3px] [&>div>span]:border-b [&>div>span]:border-r [&>div>span]:border-[#f0f0f0] [&>div>span:nth-child(1)]:bg-[#f0f0f0] [&>div>span:nth-child(1)]:border-[#7c7c7c] [&>div>span:nth-child(1)]:pl-[4px] [&>div>span:nth-child(2)]:justify-end [&>div>span:nth-child(2)]:pr-[6px] [&>div>span:nth-child(3)]:pl-[5px] [&>div>span:nth-child(3)]:text-[16px] [&>div>span:nth-child(3)]:tracking-[-0.5px] [&>div>span:nth-child(4)]:justify-end [&>div>span:nth-child(4)]:pr-[6px] [&>div>span:nth-child(5)]:pl-[5px] [&>div>span:nth-child(5)]:text-[16px] [&>div>span:nth-child(5)]:tracking-[-0.5px] [&>div>span:nth-child(6)]:justify-end [&>div>span:nth-child(6)]:pr-[7px] [&>div>span:nth-child(7)]:justify-end [&>div>span:nth-child(7)]:pr-[7px] [&>div>span:nth-child(8)]:bg-white">
            <div class="bg-[#bfd5ec]"><span class="!bg-[#7cb8ea]">1</span><span class="!bg-[#6aa9e0] !border-[3px] !border-black !pt-0 text-white">1</span><span><em>システム</em>導入</span><span>10,000</span><span>ABC株式会社</span><span>2023-01-01</span><span>2023-12-31</span><span></span></div>
            <div><span>2</span><span>2</span><span>保守<em>サービス</em></span><span>25,000</span><span>XYZ商事</span><span>2023-02-01</span><span>2023-11-30</span><span></span></div>
            <div class="bg-[#dce6f2]"><span>3</span><span>4</span><span><em>ネットワーク</em>構築</span><span>50,000</span><span>GHI<em>テクノロジー</em></span><span>2023-04-01</span><span>2023-09-30</span><span></span></div>
            <div><span>4</span><span>5</span><span><em>ソフトウェアライセンス</em></span><span>30,000</span><span>JKL<em>インターナショナル</em></span><span>2023-05-01</span><span>2023-08-31</span><span></span></div>
            <div class="bg-[#dce6f2]"><span>5</span><span>6</span><span><em>データセンター</em>運営</span><span>20,000</span><span>MNO<em>エンタープライズ</em></span><span>2023-06-01</span><span>2024-05-31</span><span></span></div>
            <div><span>6</span><span>7</span><span><em>システム</em>監視<em>サービス</em></span><span>40,000</span><span>PQR<em>セキュリティ</em></span><span>2023-07-01</span><span>2024-06-30</span><span></span></div>
            <div class="bg-[#dce6f2]"><span>7</span><span>9</span><span>IT<em>コンサルティング</em></span><span>45,000</span><span>VWX<em>コーポレーション</em></span><span>2023-09-01</span><span>2024-08-31</span><span></span></div>
            <div><span>8</span><span>10</span><span><em>ハードウェア</em>保守</span><span>55,000</span><span>YZA<em>インダストリーズ</em></span><span>2023-10-01</span><span>2024-09-30</span><span></span></div>
            <div class="bg-[#dce6f2]"><span>9</span><span>11</span><span><em>サーバー</em>構築</span><span>80,000</span><span>BCD<em>システムズ</em></span><span>2024-01-01</span><span>2024-03-31</span><span></span></div>
            <div><span>10</span><span>8</span><span><em>アプリケーション</em>開発</span><span>70,000</span><span>STU<em>ソリューションズ</em></span><span>2023-08-01</span><span class="text-[#a8a8a8]">[NULL]</span><span></span></div>
          </div>
          <div class="grid grid-cols-[40px_128px_143px_96px_143px_144px_144px_1fr] flex-1 bg-white [&>div]:border-r [&>div]:border-[#f0f0f0] [&>div]:bg-[repeating-linear-gradient(to_bottom,transparent_0,transparent_23px,#f0f0f0_23px,#f0f0f0_24px)]">
            <div class="!border-[#7c7c7c] !bg-[repeating-linear-gradient(to_bottom,#f0f0f0_0,#f0f0f0_23px,#7c7c7c_23px,#7c7c7c_24px)]"></div><div></div><div></div><div></div><div></div><div></div><div></div><div class="!border-0"></div>
          </div>
        </div>
        <!-- right bar -->
        <div class="flex flex-col items-center w-[29px] shrink-0 pt-[7px]">
          <svg class="w-4 h-4" viewBox="0 0 16 16"><path d="M2 1h13v13H7" fill="#fff" stroke="#1c84c8" stroke-width="1.200"/><path d="M9 1h6v11H9z" fill="#1c84c8"/><path d="M2 10h4v4H2z" fill="#1c84c8"/></svg>
          <span class="mt-[3px] text-[14px] tracking-[-1px] [writing-mode:vertical-rl] [text-orientation:sideways]">パネル</span>
          <svg class="w-4 h-4 mt-[11px]" viewBox="0 0 16 16"><circle cx="8" cy="8" r="7" fill="#fff" stroke="#3a8fd0" stroke-width="1.300"/><path d="M5.500 5.500h1.500V7H5.500zM9 5.500h1.500V7H9zM5.500 9h1.500v1.500H5.500zM9 9h1.500v1.500H9z" fill="#3a8fd0"/></svg>
          <svg class="w-4 h-4 mt-[7px]" viewBox="0 0 16 16"><path d="M1.500 1.500h13v13h-13z" fill="#fff" stroke="#1c84c8" stroke-width="1.200"/><path d="M2 2h12v8H2z" fill="#6fb6e4"/><path d="M3 3h2v2H3zM7 3h2v2H7zM11 3h2v2h-2zM5 5h2v2H5zM9 5h2v2H9zM3 7h2v2H3zM7 7h2v2H7zM11 7h2v2h-2z" fill="#fff"/></svg>
          <svg class="w-4 h-4 mt-[7px]" viewBox="0 0 16 16"><path d="M1.500 1.500h13v4M1.500 1.500v13h8" fill="none" stroke="#1c84c8" stroke-width="1.200"/><path d="M2 2h12v3H2zM3 6h6v5H3z" fill="#5fb0e6"/><path d="M11 12h4M11 10.500v3M15 10.500v3" stroke="#1c84c8"/></svg>
          <svg class="w-4 h-4 mt-[7px]" viewBox="0 0 16 16"><circle cx="4" cy="4" r="3" fill="#5d7f9e"/><circle cx="12" cy="4" r="3" fill="#3a8fd0"/><circle cx="4" cy="12" r="3" fill="none" stroke="#3a8fd0" stroke-width="1.200"/><circle cx="12" cy="12" r="3" fill="#f28500"/><path d="M2.500 4h3M10.500 4h3M10.500 12h3" stroke="#fff"/></svg>
          <svg class="w-4 h-4 mt-[7px]" viewBox="0 0 16 16"><path d="M1 5h14v10H1z" fill="#fff" stroke="#1c84c8"/><path d="M1 5h14v3H1zM1 8h3M5 5v10M10 5v10M1 11.500h14" fill="#1c84c8" stroke="#1c84c8"/><path d="M6 3h3v12H6z" fill="#f28500"/><path d="M7.500 0v3" stroke="#f28500"/></svg>
        </div>
      </div>

      <!-- bottom toolbar -->
      <div class="flex items-center h-[34px] shrink-0">
        <svg class="w-4 h-4 ml-[38px]" viewBox="0 0 16 16"><path d="M3 8a5 5 0 0 1 8.500-3.500M13 8a5 5 0 0 1-8.500 3.500" fill="none" stroke="#1c9ad6" stroke-width="1.600"/><path d="M1 6.500l2 3 2.500-3zM15 9.500l-2-3-2.500 3z" fill="#1c9ad6"/><path d="M8 1l7 7-7 7-7-7z" fill="none" stroke="#1c9ad6" stroke-width=".8"/></svg>
        <span class="w-[36px] ml-[4px] text-[15.5px]">更新</span>
        <svg class="w-[10px] h-[6px] ml-[9px]"><use href="#ar"/></svg>
        <span class="w-[2px] h-[20px] ml-[8px] border-l-2 border-dotted border-[#b5b5b5]"></span>
        <svg class="w-4 h-4 ml-[9px]" viewBox="0 0 16 16"><circle cx="8" cy="8" r="7" fill="none" stroke="#a5a5a5" stroke-width="1.200"/><path d="M4.500 8l2.500 3 4.500-5.500" fill="none" stroke="#a5a5a5" stroke-width="1.200"/></svg>
        <span class="w-[40px] ml-[4px] text-[#a8a8a8]">Save</span>
        <svg class="w-[10px] h-[6px] ml-[5px] text-[#8a8a8a]"><use href="#ar"/></svg>
        <svg class="w-4 h-4 ml-[8px]" viewBox="0 0 16 16"><path d="M2.500 2.500h11v11h-11zM5 5l6 6M11 5l-6 6" fill="none" stroke="#a5a5a5"/></svg>
        <span class="w-[48px] ml-[5px] text-[#a8a8a8]">Cancel</span>
        <span class="w-[2px] h-[20px] ml-[4px] border-l-2 border-dotted border-[#b5b5b5]"></span>
        <svg class="w-4 h-4 ml-[6px]"><use href="#rowp"/><path d="M10 15l5-5" stroke="#0b87ce" stroke-width="1.500"/></svg>
        <svg class="w-4 h-4 ml-[8px]"><use href="#rowp"/><path d="M10 12.500h6M13 9.500v6" stroke="#12a34a" stroke-width="1.700"/></svg>
        <svg class="w-4 h-4 ml-[8px]"><use href="#rowp"/><circle cx="12" cy="12" r="3.500" fill="#fff" stroke="#12a34a"/><path d="M10 12h4M12 10v4" stroke="#12a34a"/></svg>
        <svg class="w-4 h-4 ml-[8px]"><use href="#rowp"/><path d="M9 12.500h7" stroke="#e8392a" stroke-width="2"/></svg>
        <span class="w-[2px] h-[20px] ml-[8px] border-l-2 border-dotted border-[#b5b5b5]"></span>
        <svg class="w-4 h-4 ml-[5px]" viewBox="0 0 16 16"><path d="M3 2v12M13 2L7 8l6 6" fill="none" stroke="#9a9a9a" stroke-width="1.800"/></svg>
        <svg class="w-4 h-4 ml-[6px]" viewBox="0 0 16 16"><path d="M11 2L5 8l6 6" fill="none" stroke="#9a9a9a" stroke-width="1.800"/></svg>
        <svg class="w-4 h-4 ml-[9px]" viewBox="0 0 16 16"><path d="M5 2l6 6-6 6" fill="none" stroke="#0b87ce" stroke-width="2"/></svg>
        <svg class="w-4 h-4 ml-[6px]" viewBox="0 0 16 16"><path d="M2 2l6 6-6 6M12.500 1v14" fill="none" stroke="#0b87ce" stroke-width="2"/></svg>
        <svg class="w-4 h-4 ml-[7px]" viewBox="0 0 16 16"><path d="M1.500 5V1.500H5M11 1.500h3.500V5M14.500 11v3.500H11M5 14.500H1.500V11" fill="none" stroke="#9a9a9a"/><path d="M5.500 4.500H9l1.500 1.500v5.500h-5z" fill="none" stroke="#9a9a9a"/></svg>
        <span class="w-[2px] h-[20px] ml-[11px] border-l-2 border-dotted border-[#b5b5b5]"></span>
        <svg class="w-4 h-4 ml-[9px]" viewBox="0 0 16 16"><path d="M2 10v5h12v-5M8 12V2M4.500 5L8 1.500 11.500 5" fill="none" stroke="#0b87ce" stroke-width="1.400"/></svg>
        <span class="w-[157px] ml-[4px]">結果<em>セットのエクスポー</em>...</span>
        <svg class="w-[10px] h-[6px] ml-[6px]"><use href="#ar"/></svg>
        <span class="w-[2px] h-[20px] ml-[9px] border-l-2 border-dotted border-[#b5b5b5]"></span>
        <svg class="w-4 h-4 ml-[5px]" viewBox="0 0 16 16"><path d="M6.500 0h3l.5 2.300 2-1.200 2.200 2.200-1.200 2L15.800 6v3l-2.300.5 1.200 2-2.200 2.200-2-1.200-.5 2.500h-3L6 13.500l-2 1.200-2.200-2.200 1.200-2L.2 10V6.500L2.500 6 1.300 4 3.500 1.800l2 1.200z" fill="#0b87ce"/><circle cx="8" cy="8" r="2.500" fill="#f0f0f0"/></svg>
        <span class="flex items-center w-[54px] h-[26px] ml-[7px] pl-[4px] bg-white border border-[#808080]">200</span>
        <svg class="w-4 h-4 ml-[6px]" viewBox="0 0 16 16"><path d="M1.500 10v4.500h13V10M2 1l6 6 6-6M8 7v4" fill="none" stroke="#0b87ce" stroke-width="1.300"/><path d="M5.500 9h5L8 12z" fill="#0b87ce"/></svg>
        <span class="w-[17px] ml-[10px]">10</span>
        <span class="w-[2px] h-[20px] ml-[6px] border-l-2 border-dotted border-[#b5b5b5]"></span>
        <svg class="w-4 h-4 ml-auto mr-[7px] mt-[10px]" viewBox="0 0 16 16"><path d="M1 1h4v14H1z" fill="#0b87ce"/><path d="M7 12h7v3H7zM8 4l3-3v2.500q4 .5 4 5h-1.500q0-3-2.500-3.500V7z" fill="#0b87ce"/></svg>
      </div>
    </div>

    <!-- right trim -->
    <div class="flex flex-col items-center flex-1 border-l border-[#dcdcdc]">
      <span class="w-[14px] h-0 mt-[3px] border-t-2 border-dotted border-[#b5b5b5]"></span>
      <svg class="w-[10px] h-[10px] mt-[9px]" viewBox="0 0 10 10"><path d="M3 .500h6.500v5.500H3zM.500 3.500H6v6H.500z" fill="#f0f0f0" stroke="#777"/></svg>
      <svg class="w-[14px] h-[10px] mt-[12px]" viewBox="0 0 14 10"><path d="M.500.500h12v9H.500z" fill="#fff" stroke="#1c84c8"/><path d="M2 2h9v6H2z" fill="#6fb6e4"/><path d="M5 2v6M8 2v6" stroke="#fff"/></svg>
    </div>
  </div>

  <!-- status bar -->
  <div class="flex items-center flex-1 border-t-2 border-[#d8d8d8] mx-[24px] mr-[29px]">
    <span class="w-px h-[22px] ml-[1342px] bg-[#a5a5a5]"></span>
    <span class="w-[27px] ml-[7px]">JST</span>
    <span class="w-px h-[22px] bg-[#a5a5a5]"></span>
    <span class="w-[17px] ml-[7px]">ja</span>
    <span class="w-[2px] h-[16px] border-l-2 border-dotted border-[#b5b5b5]"></span>
  </div>
</div>
</body>
</html>
